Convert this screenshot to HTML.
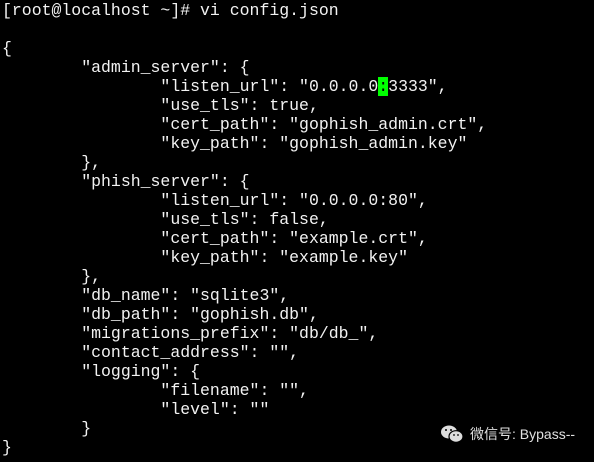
<!DOCTYPE html>
<html><head><meta charset="utf-8"><style>
html,body{margin:0;padding:0;background:#000;width:594px;height:462px;overflow:hidden}
pre{position:absolute;left:2px;top:1px;margin:0;font-family:"Liberation Mono",monospace;font-size:16.5px;line-height:19px;color:#f2f2f2}
.cur{background:#00ff00;color:#000}
.wm{position:absolute;left:470px;top:425px;font-family:"Liberation Sans","Noto Sans CJK SC",sans-serif;font-size:14px;color:#e0e0e0;line-height:18px}
</style></head><body>
<pre>[root@localhost ~]# vi config.json

{
        "admin_server": {
                "listen_url": "0.0.0.0<span class="cur">:</span>3333",
                "use_tls": true,
                "cert_path": "gophish_admin.crt",
                "key_path": "gophish_admin.key"
        },
        "phish_server": {
                "listen_url": "0.0.0.0:80",
                "use_tls": false,
                "cert_path": "example.crt",
                "key_path": "example.key"
        },
        "db_name": "sqlite3",
        "db_path": "gophish.db",
        "migrations_prefix": "db/db_",
        "contact_address": "",
        "logging": {
                "filename": "",
                "level": ""
        }
}</pre>
<svg style="position:absolute;left:440px;top:424px" width="24" height="20" viewBox="0 0 24 20">
<ellipse cx="9" cy="8" rx="8" ry="6.5" fill="#ddd"/>
<ellipse cx="16" cy="12.5" rx="7" ry="5.8" fill="#ddd" stroke="#000" stroke-width="1.2"/>
<circle cx="6" cy="6" r="1" fill="#000"/><circle cx="11" cy="6" r="1" fill="#000"/>
<circle cx="14" cy="11" r="0.9" fill="#000"/><circle cx="18" cy="11" r="0.9" fill="#000"/>
</svg>
<div class="wm">微信号: Bypass--</div>
</body></html>
